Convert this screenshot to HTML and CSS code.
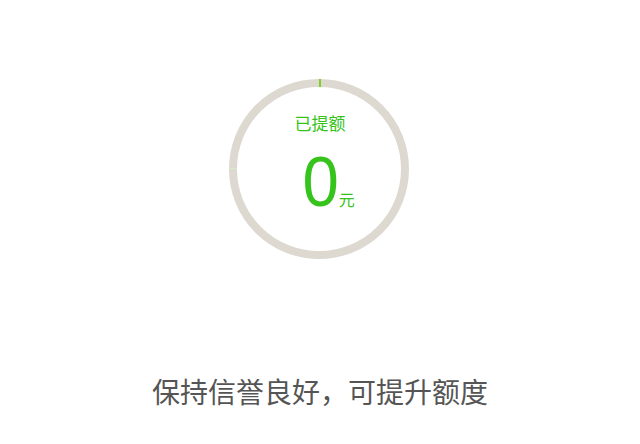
FILE: index.html
```html
<!DOCTYPE html>
<html>
<head>
<meta charset="utf-8">
<link rel="stylesheet" href="styles.css">
</head>
<body>
<div class="page">
  <div class="ring">
    <svg class="ring-svg" width="180" height="180" viewBox="0 0 180 180">
      <circle cx="90" cy="90" r="86" fill="none" stroke="#ddd9d1" stroke-width="8"/>
      <rect x="90" y="0" width="2" height="8" fill="#7ed321"/>
      <rect x="0" y="89" width="8" height="1" fill="#d4ecc4"/>
    </svg>
    <div class="ring-content">
      <div class="label">已提额</div>
      <div class="amount"><span class="num">0</span><span class="unit">元</span></div>
    </div>
  </div>
  <div class="tip">保持信誉良好，可提升额度</div>
</div>
</body>
</html>
```
FILE: styles.css
```css
html, body {
  margin: 0;
  padding: 0;
  background: #ffffff;
}
body {
  width: 640px;
  height: 444px;
  overflow: hidden;
  font-family: "Liberation Sans", "Noto Sans CJK SC", sans-serif;
}
.page {
  display: flex;
  flex-direction: column;
  align-items: center;
  padding-top: 79px;
}
.ring {
  position: relative;
  width: 180px;
  height: 180px;
  margin-left: -2px;
}
.ring-svg {
  display: block;
}
.ring-content {
  position: absolute;
  inset: 0;
  display: flex;
  flex-direction: column;
  align-items: center;
  padding-top: 34px;
}
.label {
  font-size: 17px;
  line-height: 24px;
  color: #36c41c;
  margin-left: 2px;
}
.amount {
  display: flex;
  align-items: baseline;
  margin-top: 10px;
  margin-left: 18px;
  color: #36c41c;
}
.num {
  font-size: 71px;
  line-height: 70px;
  transform: scaleX(0.92);
}
.unit {
  font-size: 16px;
  margin-left: -2px;
}
.tip {
  margin-top: 115px;
  font-size: 28px;
  line-height: 40px;
  color: #555555;
}
```
